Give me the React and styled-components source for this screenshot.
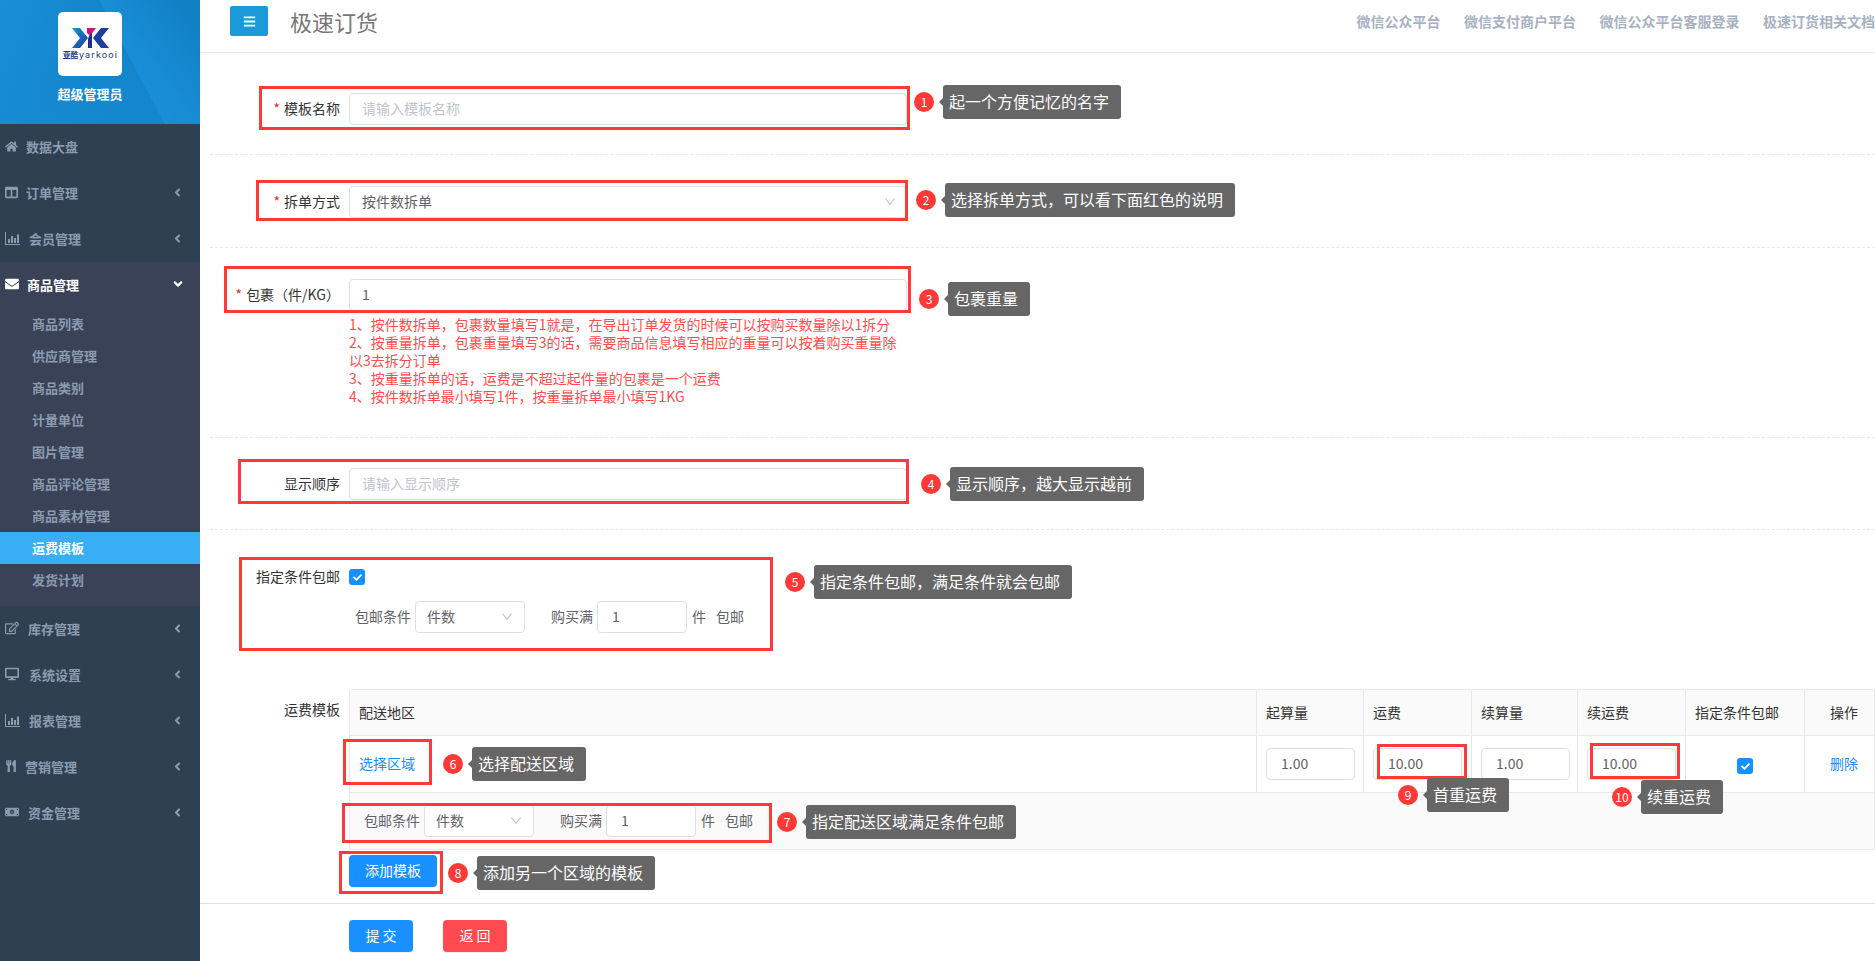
import React from "react";
import styled, { createGlobalStyle } from "styled-components";
import {
  FaHome,
  FaColumns,
  FaEnvelope,
  FaRegEdit,
  FaDesktop,
  FaUtensils,
  FaMoneyBillAlt,
  FaAngleLeft,
  FaAngleDown,
  FaBars,
  FaCheck,
} from "react-icons/fa";

const FONT = `"Noto Sans CJK SC", "Noto Sans", Roboto, sans-serif`;

const Global = createGlobalStyle`
  html, body { margin: 0; padding: 0; background: #fff; }
  body { font-family: ${FONT}; font-size: 14px; color: #333; overflow: hidden; }
  * { box-sizing: border-box; }
`;

const Page = styled.div`
  position: relative;
  display: flex;
  width: 1875px;
  height: 961px;
  overflow: hidden;
`;

/* ---------- sidebar ---------- */
const Sidebar = styled.aside`
  flex: 0 0 200px;
  width: 200px;
  height: 961px;
  background: #2f4050;
`;

const Brand = styled.div`
  height: 124px;
  padding: 12px 20px 0 0;
  display: flex;
  flex-direction: column;
  align-items: center;
  background:
    linear-gradient(62deg, transparent 62%, rgba(30, 150, 225, 0.55) 62%, transparent 92%),
    linear-gradient(130deg, rgba(28, 148, 222, 0.7) 0%, rgba(28, 148, 222, 0) 42%),
    linear-gradient(205deg, #1080c4 0%, #1486cd 55%, #168ad2 100%);
`;

const LogoBox = styled.div`
  width: 64px;
  height: 64px;
  border-radius: 5px;
  background: #fff;
  display: flex;
  flex-direction: column;
  align-items: center;
  padding-top: 16px;
`;

const BrandName = styled.div`
  margin-top: 10px;
  font-size: 13px;
  line-height: 16px;
  font-weight: 700;
  color: #fff;
`;

const Menu = styled.nav`
  display: flex;
  flex-direction: column;
`;

const MenuRow = styled.div`
  display: flex;
  align-items: center;
  height: 46px;
  padding: 0 0 2px 5px;
  font-size: 13px;
  font-weight: 700;
  color: ${(p) => (p.$open ? "#fff" : "#8c9bb0")};
`;

const MenuIcon = styled.span`
  display: flex;
  align-items: center;
  width: ${(p) => p.$w}px;
  margin-right: ${(p) => p.$gap}px;
  font-size: ${(p) => p.$w}px;
  color: ${(p) => (p.$open ? "#fff" : "#8c9bb0")};
`;

const MenuLabel = styled.span`
  flex: 1;
`;

const MenuCaret = styled.span`
  display: flex;
  width: 29px;
  font-size: ${(p) => (p.$open ? 14 : 13)}px;
  margin-left: ${(p) => (p.$open ? -2 : 0)}px;
`;

const MenuGroup = styled.div`
  background: #394257;
  padding-bottom: 10px;
`;

const SubItem = styled.div`
  height: 32px;
  line-height: 31px;
  padding-left: 32px;
  font-size: 13px;
  font-weight: 700;
  color: ${(p) => (p.$active ? "#fff" : "#8c9bb0")};
  background: ${(p) => (p.$active ? "#38aef5" : "transparent")};
`;

/* ---------- main column ---------- */
const Main = styled.main`
  flex: 1;
  min-width: 0;
  display: flex;
  flex-direction: column;
`;

const Header = styled.header`
  height: 53px;
  flex: 0 0 53px;
  display: flex;
  align-items: flex-start;
  border-bottom: 1px solid #e7eaec;
`;

const MenuButton = styled.div`
  margin: 6px 0 0 30px;
  width: 38px;
  height: 30px;
  border-radius: 2px;
  background: #1a9ad9;
  color: #fff;
  font-size: 13px;
  display: flex;
  align-items: center;
  justify-content: center;
`;

const Title = styled.div`
  margin: 4px 0 0 22px;
  font-size: 22px;
  line-height: 34px;
  color: #777;
`;

const HeaderLinks = styled.div`
  margin-left: auto;
  margin-top: 11px;
  display: flex;
  gap: 23.500px;
  font-size: 14px;
  line-height: 20px;
  font-weight: 700;
  color: #a7b1c2;
  white-space: nowrap;
`;

const Form = styled.div`
  flex: 1;
  padding: 9px 0 0 10px;
`;

const Section = styled.section`
  padding: ${(p) => p.$top ?? 31}px 0 ${(p) => p.$bottom ?? 29}px;
  border-bottom: ${(p) => (p.$plain ? "0" : "1px dashed #e8e8e8")};
`;

const Row = styled.div`
  display: flex;
  align-items: ${(p) => (p.$top ? "flex-start" : "center")};
  min-height: 32px;
  margin-top: ${(p) => p.$mt ?? 0}px;
`;

const Label = styled.label`
  flex: 0 0 130px;
  width: 130px;
  margin-right: 9px;
  text-align: right;
  font-size: 14px;
  line-height: 30px;
  color: #333;
  white-space: nowrap;
  padding-top: ${(p) => p.$pad ?? 0}px;
  padding-bottom: 2px;
`;

const Star = styled.span`
  color: #f5222d;
  margin-right: 4px;
`;

const Field = styled.div`
  display: flex;
  align-items: center;
  flex: none;
  width: ${(p) => p.$w}px;
  height: 32px;
  padding: 0 ${(p) => p.$pad ?? 12}px 2px;
  background: #fff;
  border: 1px solid #dcdfe6;
  border-radius: 4px;
  font-size: 14px;
  color: ${(p) => (p.$ph ? "#c0c4cc" : "#606266")};
  justify-content: space-between;
`;

const Chevron = styled.svg`
  width: 12px;
  height: 12px;
  flex: none;
  fill: none;
  stroke: #c0c4cc;
  stroke-width: 1.2;
  margin-right: ${(p) => p.$mr ?? -2}px;
`;

const Help = styled.div`
  width: 558px;
  margin: 4px 0 0 139px;
  font-size: 14px;
  line-height: 18px;
  color: #ff4d4f;
`;

const Checkbox = styled.span`
  display: inline-flex;
  align-items: center;
  justify-content: center;
  width: 16px;
  height: 16px;
  border-radius: 3px;
  background: #1890ff;
  color: #fff;
  font-size: 9px;
  vertical-align: middle;
`;

const RuleLine = styled.div`
  display: flex;
  align-items: center;
  margin-left: ${(p) => p.$ml}px;
  font-size: 14px;
  line-height: 30px;
  color: #606266;
  white-space: nowrap;
`;

const RuleGap = styled.span`
  flex: none;
  width: ${(p) => p.$w}px;
`;

const RuleText = styled.span`
  padding-bottom: 2px;
`;

const TableWrap = styled.div`
  flex: 1;
`;

const Table = styled.table`
  width: 1526px;
  table-layout: fixed;
  border-collapse: separate;
  border-spacing: 0;
  border-top: 1px solid #e8e8e8;
  border-left: 1px solid #e8e8e8;
  border-top-left-radius: 4px;
`;

const Th = styled.th`
  height: 46px;
  padding: 0 9px 2px ${(p) => p.$left ?? 9}px;
  font-size: 14px;
  font-weight: 400;
  color: #333;
  text-align: left;
  background: #fafafa;
  border-right: 1px solid #e8e8e8;
  border-bottom: 1px solid #e8e8e8;
  white-space: nowrap;
`;

const Td = styled.td`
  height: 57px;
  padding: 0 9px 0 ${(p) => p.$left ?? 9}px;
  font-size: 14px;
  text-align: ${(p) => (p.$center ? "center" : "left")};
  border-right: 1px solid #e8e8e8;
  border-bottom: 1px solid #e8e8e8;
  background: ${(p) => (p.$shade ? "#fafafa" : "#fff")};
`;

const LinkText = styled.span`
  color: #1890ff;
  font-size: 14px;
  display: inline-block;
  padding-bottom: 2px;
`;

const Button = styled.div`
  display: inline-flex;
  align-items: center;
  justify-content: center;
  width: ${(p) => p.$w}px;
  height: 32px;
  padding-bottom: 2px;
  border-radius: 4px;
  font-size: 14px;
  color: #fff;
  background: ${(p) => (p.$danger ? "#ff4a50" : "#1890ff")};
  box-shadow: 0 1px 1px rgba(0, 0, 0, 0.06);
  white-space: pre;
`;

const AddRow = styled.div`
  margin: 5px 0 16px 139px;
  height: 32px;
`;

const Footer = styled.div`
  margin-left: -10px;
  padding: 16px 0 0 149px;
  border-top: 1px solid #e0e0e0;
  display: flex;
  gap: 30px;
`;

/* ---------- annotations that lie over the page ---------- */
const RedBox = styled.div`
  position: absolute;
  left: ${(p) => p.$x}px;
  top: ${(p) => p.$y}px;
  width: ${(p) => p.$w}px;
  height: ${(p) => p.$h}px;
  border: 3px solid #ff3838;
  pointer-events: none;
`;

const Callout = styled.div`
  position: absolute;
  left: ${(p) => p.$x}px;
  top: ${(p) => p.$y}px;
  display: flex;
  align-items: center;
  gap: 9px;
`;

const Badge = styled.span`
  display: flex;
  align-items: center;
  justify-content: center;
  width: 20px;
  height: 20px;
  padding-bottom: 1px;
  border-radius: 50%;
  background: #ff3838;
  color: #fff;
  font-size: 12px;
`;

const Tip = styled.div`
  position: relative;
  height: 34px;
  padding: 0 12px 0 6px;
  border-radius: 3px;
  background: #666;
  color: #fff;
  font-size: 16px;
  line-height: 33px;
  white-space: nowrap;
  &::before {
    content: "";
    position: absolute;
    left: -4px;
    top: 13px;
    border-style: solid;
    border-width: 4px 4px 4px 0;
    border-color: transparent #666 transparent transparent;
  }
`;

const BarChart = () => (
  <svg width="15" height="13" viewBox="0 0 15 13" fill="currentColor">
    <path d="M0 0h1v12h14v1H0z" />
    <path d="M3 7h2v4H3zM6 4h2v7H6zM9 6h2v5H9zM12 2.500h2V11h-2z" />
  </svg>
);

const Logo = () => (
  <svg width="54" height="36" viewBox="0 0 54 36">
    <defs>
      <linearGradient id="lg" x1="0" y1="0" x2="1" y2="1">
        <stop offset="0" stopColor="#1f95d6" />
        <stop offset="1" stopColor="#1b3a98" />
      </linearGradient>
    </defs>
    <path d="M9 0h8l8 10-8 10H9l8-10z" fill="url(#lg)" />
    <path d="M24 0h9l-6 8-3-3z" fill="#c2187c" />
    <path d="M26 8l3-3v15h-4V11z" fill="#1d2f86" />
    <path d="M30 10L38 0h8l-8 10 8 10h-8z" fill="#1d3f9c" />
    <text x="0" y="30" fontSize="7.500" fontWeight="700" fill="#233a7c" fontFamily={FONT}>
      亚酷
    </text>
    <text x="16" y="30" fontSize="9" fill="#233a7c" fontFamily="Inter, sans-serif" textLength="38">
      yarkooi
    </text>
  </svg>
);

const DownArrow = ({ mr }) => (
  <Chevron viewBox="0 0 12 12" $mr={mr}>
    <path d="M1.500 3.500L6 9.500l4.500-6" />
  </Chevron>
);

const Rule = ({ ml }) => (
  <RuleLine $ml={ml}>
    <RuleText>包邮条件</RuleText>
    <RuleGap $w={4} />
    <Field $w={110} $pad={11}>
      件数
      <DownArrow mr={0} />
    </Field>
    <RuleGap $w={26} />
    <RuleText>购买满</RuleText>
    <RuleGap $w={4} />
    <Field $w={90} $pad={14}>1</Field>
    <RuleGap $w={5} />
    <RuleText>件</RuleText>
    <RuleGap $w={10} />
    <RuleText>包邮</RuleText>
  </RuleLine>
);

const menuTop = [
  { t: "数据大盘", i: <FaHome />, w: 13, g: 8, caret: false },
  { t: "订单管理", i: <FaColumns />, w: 13, g: 8, caret: true },
  { t: "会员管理", i: <BarChart />, w: 15, g: 9, caret: true },
];
const menuBottom = [
  { t: "库存管理", i: <FaRegEdit />, w: 14, g: 9, caret: true },
  { t: "系统设置", i: <FaDesktop />, w: 14, g: 10, caret: true },
  { t: "报表管理", i: <BarChart />, w: 15, g: 9, caret: true },
  { t: "营销管理", i: <FaUtensils />, w: 12, g: 8, caret: true },
  { t: "资金管理", i: <FaMoneyBillAlt />, w: 14, g: 9, caret: true },
];
const subs = ["商品列表", "供应商管理", "商品类别", "计量单位", "图片管理", "商品评论管理", "商品素材管理", "运费模板", "发货计划"];

const boxes = [
  [259, 86, 651, 44],
  [256, 180, 652, 41],
  [224, 266, 687, 47],
  [238, 459, 671, 45],
  [239, 557, 534, 94],
  [343, 739, 89, 46],
  [342, 803, 430, 40],
  [339, 851, 104, 43],
  [1377, 744, 90, 35],
  [1590, 743, 90, 36],
];

const callouts = [
  [914, 85, "1", "起一个方便记忆的名字"],
  [916, 183, "2", "选择拆单方式，可以看下面红色的说明"],
  [919, 282, "3", "包裹重量"],
  [921, 467, "4", "显示顺序，越大显示越前"],
  [785, 565, "5", "指定条件包邮，满足条件就会包邮"],
  [443, 747, "6", "选择配送区域"],
  [777, 805, "7", "指定配送区域满足条件包邮"],
  [448, 856, "8", "添加另一个区域的模板"],
  [1398, 778, "9", "首重运费"],
  [1612, 780, "10", "续重运费"],
];

const MenuEntry = ({ t, i, w, g, caret, open }) => (
  <MenuRow $open={open}>
    <MenuIcon $w={w} $gap={g} $open={open}>{i}</MenuIcon>
    <MenuLabel>{t}</MenuLabel>
    {caret && <MenuCaret $open={open}>{open ? <FaAngleDown /> : <FaAngleLeft />}</MenuCaret>}
  </MenuRow>
);

export default function App() {
  return (
    <Page>
      <Global />
      <Sidebar>
        <Brand>
          <LogoBox>
            <Logo />
          </LogoBox>
          <BrandName>超级管理员</BrandName>
        </Brand>
        <Menu>
          {menuTop.map((m) => (
            <MenuEntry key={m.t} {...m} />
          ))}
          <MenuGroup>
            <MenuEntry t="商品管理" i={<FaEnvelope />} w={14} g={8} caret open />
            {subs.map((s) => (
              <SubItem key={s} $active={s === "运费模板"}>{s}</SubItem>
            ))}
          </MenuGroup>
          {menuBottom.map((m) => (
            <MenuEntry key={m.t} {...m} />
          ))}
        </Menu>
      </Sidebar>

      <Main>
        <Header>
          <MenuButton>
            <FaBars />
          </MenuButton>
          <Title>极速订货</Title>
          <HeaderLinks>
            <span>微信公众平台</span>
            <span>微信支付商户平台</span>
            <span>微信公众平台客服登录</span>
            <span>极速订货相关文档</span>
          </HeaderLinks>
        </Header>

        <Form>
          <Section>
            <Row>
              <Label><Star>*</Star>模板名称</Label>
              <Field $w={558} $ph>请输入模板名称</Field>
            </Row>
          </Section>
          <Section>
            <Row>
              <Label><Star>*</Star>拆单方式</Label>
              <Field $w={558}>
                按件数拆单
                <DownArrow />
              </Field>
            </Row>
          </Section>
          <Section $bottom={32}>
            <Row>
              <Label><Star>*</Star>包裹（件/KG）</Label>
              <Field $w={558}>1</Field>
            </Row>
            <Help>
              1、按件数拆单，包裹数量填写1就是，在导出订单发货的时候可以按购买数量除以1拆分
              <br />
              2、按重量拆单，包裹重量填写3的话，需要商品信息填写相应的重量可以按着购买重量除以3去拆分订单
              <br />
              3、按重量拆单的话，运费是不超过起件量的包裹是一个运费
              <br />
              4、按件数拆单最小填写1件，按重量拆单最小填写1KG
            </Help>
          </Section>
          <Section $top={30}>
            <Row>
              <Label>显示顺序</Label>
              <Field $w={558} $ph>请输入显示顺序</Field>
            </Row>
          </Section>
          <Section $top={31} $bottom={56} $plain>
            <Row>
              <Label>指定条件包邮</Label>
              <Checkbox><FaCheck /></Checkbox>
            </Row>
            <Row $mt={8}>
              <RuleGap $w={139} />
              <Rule ml={6} />
            </Row>
          </Section>
          <Row $top>
            <Label $pad={5}>运费模板</Label>
            <TableWrap>
              <Table>
                <colgroup>
                  <col />
                  <col width="107" />
                  <col width="108" />
                  <col width="106" />
                  <col width="108" />
                  <col width="119" />
                  <col width="70" />
                </colgroup>
                <thead>
                  <tr>
                    <Th>配送地区</Th>
                    <Th>起算量</Th>
                    <Th>运费</Th>
                    <Th>续算量</Th>
                    <Th>续运费</Th>
                    <Th>指定条件包邮</Th>
                    <Th $left={25}>操作</Th>
                  </tr>
                </thead>
                <tbody>
                  <tr>
                    <Td><LinkText>选择区域</LinkText></Td>
                    <Td><Field $w={89} $pad={14}>1.00</Field></Td>
                    <Td><Field $w={89} $pad={14}>10.00</Field></Td>
                    <Td><Field $w={89} $pad={14}>1.00</Field></Td>
                    <Td><Field $w={89} $pad={14}>10.00</Field></Td>
                    <Td $center><Checkbox><FaCheck /></Checkbox></Td>
                    <Td $left={25}><LinkText>删除</LinkText></Td>
                  </tr>
                  <tr>
                    <Td colSpan={7} $shade>
                      <Rule ml={5} />
                    </Td>
                  </tr>
                </tbody>
              </Table>
            </TableWrap>
          </Row>
          <AddRow>
            <Button $w={88}>添加模板</Button>
          </AddRow>
          <Footer>
            <Button $w={64}>提 交</Button>
            <Button $w={64} $danger>返 回</Button>
          </Footer>
        </Form>
      </Main>

      {boxes.map(([x, y, w, h]) => (
        <RedBox key={`${x}-${y}`} $x={x} $y={y} $w={w} $h={h} />
      ))}
      {callouts.map(([x, y, n, t]) => (
        <Callout key={n} $x={x} $y={y}>
          <Badge>{n}</Badge>
          <Tip>{t}</Tip>
        </Callout>
      ))}
    </Page>
  );
}
